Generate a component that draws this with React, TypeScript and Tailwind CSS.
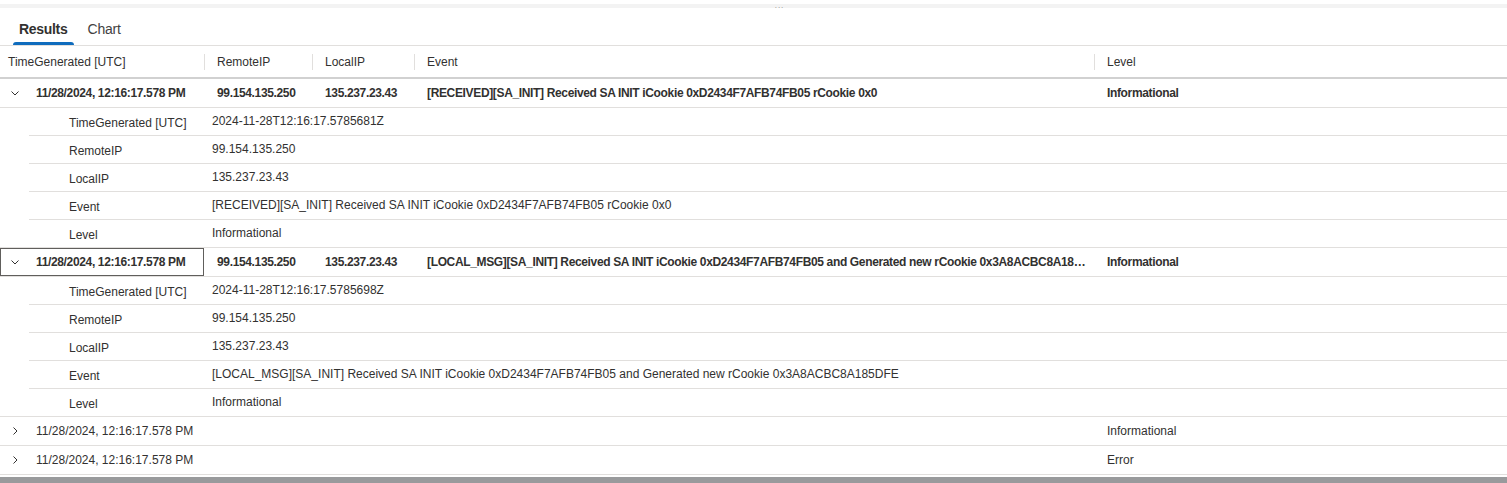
import React from 'react';

const font = { fontFamily: '"Segoe UI", "Liberation Sans", Arial, sans-serif' };

type Rec = {
  time: string;
  iso: string;
  remote: string;
  local: string;
  event: string;
  level: string;
  open: boolean;
};

const records: Rec[] = [
  {
    time: '11/28/2024, 12:16:17.578 PM',
    iso: '2024-11-28T12:16:17.5785681Z',
    remote: '99.154.135.250',
    local: '135.237.23.43',
    event: '[RECEIVED][SA_INIT] Received SA INIT iCookie 0xD2434F7AFB74FB05 rCookie 0x0',
    level: 'Informational',
    open: true,
  },
  {
    time: '11/28/2024, 12:16:17.578 PM',
    iso: '2024-11-28T12:16:17.5785698Z',
    remote: '99.154.135.250',
    local: '135.237.23.43',
    event: '[LOCAL_MSG][SA_INIT] Received SA INIT iCookie 0xD2434F7AFB74FB05 and Generated new rCookie 0x3A8ACBC8A185DFE',
    level: 'Informational',
    open: true,
  },
  {
    time: '11/28/2024, 12:16:17.578 PM',
    iso: '',
    remote: '',
    local: '',
    event: '',
    level: 'Informational',
    open: false,
  },
  {
    time: '11/28/2024, 12:16:17.578 PM',
    iso: '',
    remote: '',
    local: '',
    event: '',
    level: 'Error',
    open: false,
  },
];

const cols = 'grid grid-cols-[204px_108px_102px_680px_1fr]';

function Chevron({ open }: { open: boolean }) {
  return (
    <svg width="10" height="10" viewBox="0 0 10 10" className="shrink-0">
      {open ? (
        <path d="M1.5 3.5 L5 7 L8.5 3.5" fill="none" stroke="#323130" strokeWidth="1" />
      ) : (
        <path d="M3.5 1.5 L7 5 L3.5 8.5" fill="none" stroke="#323130" strokeWidth="1" />
      )}
    </svg>
  );
}

function HeaderCell({ label, first }: { label: string; first?: boolean }) {
  return (
    <div className="flex items-center h-full relative">
      {!first && <div className="absolute left-0 top-[8px] h-[16px] w-px bg-[#e1dfdd]" />}
      <span className={first ? 'pl-[8px]' : 'pl-[13px]'}>{label}</span>
    </div>
  );
}

function DetailRow({ label, value, full }: { label: string; value: string; full?: boolean }) {
  return (
    <div className={`${full ? '' : 'ml-[29px]'} border-b border-[#e1dfdd] h-[28px] flex items-center`}>
      <span className={`${full ? 'w-[212px] pl-[69px]' : 'w-[183px] pl-[40px]'} pt-[3px] shrink-0`}>{label}</span>
      <span className="pb-[1px]">{value}</span>
    </div>
  );
}

function Record({ r, focused }: { r: Rec; focused?: boolean }) {
  const b = r.open ? 'font-bold tracking-[-0.35px]' : '';
  return (
    <div>
      <div className={`${cols} h-[29px] items-center border-b border-[#e1dfdd]`}>
        <div className={`flex items-center h-full pl-[10px] gap-[16px] ${focused ? 'outline outline-1 -outline-offset-1 outline-[#605e5c]' : ''}`}>
          <Chevron open={r.open} />
          <span className={b}>{r.time}</span>
        </div>
        <div className={`pl-[13px] ${b}`}>{r.open ? r.remote : ''}</div>
        <div className={`pl-[13px] ${b}`}>{r.open ? r.local : ''}</div>
        <div className={`pl-[13px] pr-[4px] truncate ${b}`}>{r.open ? r.event : ''}</div>
        <div className={`pl-[13px] ${b}`}>{r.level}</div>
      </div>
      {r.open && (
        <div>
          <DetailRow label="TimeGenerated [UTC]" value={r.iso} />
          <DetailRow label="RemoteIP" value={r.remote} />
          <DetailRow label="LocalIP" value={r.local} />
          <DetailRow label="Event" value={r.event} />
          <DetailRow label="Level" value={r.level} full />
        </div>
      )}
    </div>
  );
}

export default function App() {
  return (
    <div className="w-[1507px] h-[483px] bg-white text-[12px] text-[#323130] overflow-hidden flex flex-col" style={font}>
      <div className="h-[4px] shrink-0" />
      <div className="h-[4px] shrink-0 bg-[#f3f3f3] flex justify-center items-end">
        <span className="text-[#8a8886] text-[8px] leading-[4px] tracking-[1px] ml-[52px]">...</span>
      </div>

      <div className="h-[38px] shrink-0 flex items-end border-b border-[#e1dfdd] pl-[11px] text-[14px]">
        <div className="flex flex-col items-center">
          <span className="px-[8px] pb-[2px] font-semibold tracking-[-0.3px]">Results</span>
          <div className="h-[3px] w-[61px] bg-[#0f6cbd] rounded-t-sm" />
        </div>
        <span className="pl-[7px] pb-[5px] ml-[5px] text-[#424242] tracking-[-0.2px]">Chart</span>
      </div>

      <div className={`${cols} h-[33px] shrink-0 border-b-2 border-[#d1d1d1]`}>
        <HeaderCell label="TimeGenerated [UTC]" first />
        <HeaderCell label="RemoteIP" />
        <HeaderCell label="LocalIP" />
        <HeaderCell label="Event" />
        <HeaderCell label="Level" />
      </div>

      {records.map((r, i) => (
        <Record key={i} r={r} focused={i === 1} />
      ))}

      <div className="flex-1" />
      <div className="h-[6px] shrink-0 bg-[#999a9c]" />
    </div>
  );
}
